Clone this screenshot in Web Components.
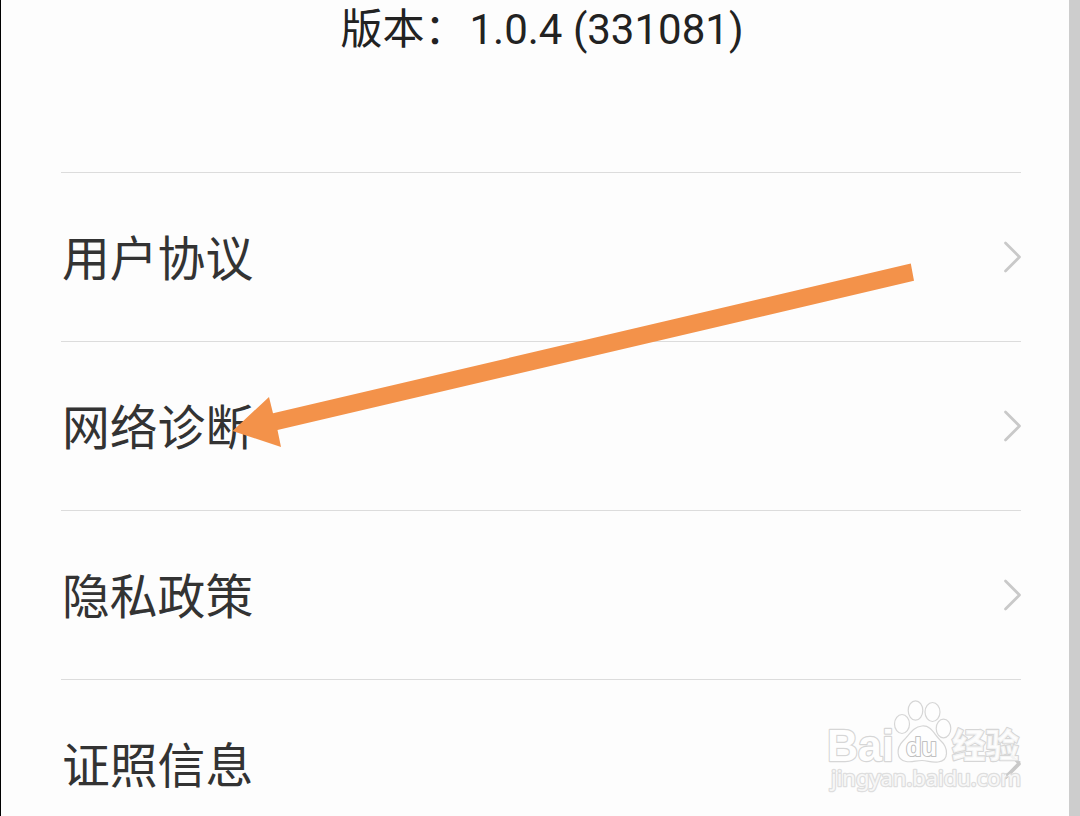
<!DOCTYPE html>
<html lang="zh-CN">
<head>
<meta charset="utf-8">
<title>关于</title>
<style>
    html, body {
        margin: 0;
        height: 100%;
        overflow: hidden;
        background: #fdfdfd;
    }
</style>
</head>
<body>
<about-page>
    <version-label slot="header" label="版本：" value="1.0.4 (331081)"></version-label>
    <menu-row>用户协议</menu-row>
    <menu-row>网络诊断</menu-row>
    <menu-row>隐私政策</menu-row>
    <menu-row>证照信息</menu-row>
    <pointer-arrow slot="overlay"></pointer-arrow>
    <site-watermark slot="overlay"></site-watermark>
</about-page>

<script>
class AboutPage extends HTMLElement {
    constructor() {
        super();
        this.attachShadow({ mode: "open" });
        this.shadowRoot.innerHTML = `
            <style>
            :host {
                display: block;
                position: relative;
                box-sizing: border-box;
                width: 1080px;
                height: 816px;
                overflow: hidden;
                border-left: 1px solid #000;
                border-right: 11px solid #cdcdcd;
                background: #fdfdfd;
                font-family: "Noto Sans CJK SC", sans-serif;
            }
            header {
                display: flex;
                justify-content: center;
                height: 172px;
                box-sizing: border-box;
                padding: 4px 0 0 14px;
            }
            main {
                display: flex;
                flex-direction: column;
                padding: 0 48px 0 60px;
            }
            </style>
            <header><slot name="header"></slot></header>
            <main><slot></slot></main>
            <slot name="overlay"></slot>
        `;
    }
}

class VersionLabel extends HTMLElement {
    static get observedAttributes() {
        return ["label", "value"];
    }

    constructor() {
        super();
        this.attachShadow({ mode: "open" });
    }

    attributeChangedCallback() {
        this.render();
    }

    render() {
        this.shadowRoot.innerHTML = `
            <style>
            :host {
                display: flex;
                align-items: baseline;
                gap: 3px;
                height: 60px;
                line-height: 51px;
                font-family: Roboto, "Noto Sans CJK SC", sans-serif;
                font-size: 42px;
                color: #222;
                white-space: nowrap;
            }
            </style>
            <span>${this.getAttribute("label") || ""}</span>
            <span>${this.getAttribute("value") || ""}</span>
        `;
    }
}

class MenuRow extends HTMLElement {
    constructor() {
        super();
        this.attachShadow({ mode: "open" });
        this.shadowRoot.innerHTML = `
            <style>
            :host {
                display: flex;
                align-items: center;
                justify-content: space-between;
                box-sizing: border-box;
                height: 169px;
                flex: none;
                border-top: 1px solid #dcdcdc;
                color: #333;
                font-size: 47.8px;
                line-height: 70px;
            }
            span {
                padding: 0 0 3px 1px;
            }
            svg {
                display: block;
                width: 20px;
                height: 34px;
            }
            </style>
            <span><slot></slot></span>
            <svg viewBox="0 0 20 34" fill="none" stroke="#c9c9c9" stroke-width="2.7" stroke-linecap="round" stroke-linejoin="round">
                <path d="M4.5 3 L18.5 17 L4.5 31"/>
            </svg>
        `;
    }
}

class PointerArrow extends HTMLElement {
    constructor() {
        super();
        this.attachShadow({ mode: "open" });
        this.shadowRoot.innerHTML = `
            <style>
            :host {
                display: block;
                position: absolute;
                left: 229px;
                top: 260px;
            }
            svg {
                display: block;
            }
            </style>
            <svg width="690" height="190" viewBox="230 260 690 190">
                <path fill="#f3924a" d="M232.5 431 L269 397 L273 413.3 L910.8 263.5 L914 280.8 L277.5 430 L281 447 Z"/>
            </svg>
        `;
    }
}

class SiteWatermark extends HTMLElement {
    constructor() {
        super();
        this.attachShadow({ mode: "open" });
        this.shadowRoot.innerHTML = `
            <style>
            :host {
                display: block;
                position: absolute;
                left: 819px;
                top: 690px;
            }
            svg {
                display: block;
            }
            text {
                paint-order: stroke;
                stroke-linejoin: round;
            }
            .latin {
                font-family: "Liberation Sans", sans-serif;
                font-weight: bold;
            }
            .cjk {
                font-family: "Noto Sans CJK SC", sans-serif;
                font-weight: 900;
            }
            .url {
                font-family: "Noto Sans", sans-serif;
            }
            .soft {
                fill-opacity: 0.8;
            }
            </style>
            <svg width="220" height="120" viewBox="820 690 220 120" fill="#fefefe" stroke="#d6d6d6" stroke-width="1.2">
                <ellipse cx="902" cy="724" rx="7.5" ry="9.5"/>
                <ellipse cx="915.5" cy="710.5" rx="7.3" ry="9.7"/>
                <ellipse cx="932.5" cy="712" rx="7.5" ry="9.5"/>
                <ellipse cx="943.5" cy="728.5" rx="7.3" ry="9.3"/>
                <path d="M922 726 C931 725 934 734 940 740 C949 748 949 761 938 762 C931 763 928 760.5 922 760.5 C916 760.5 912 762.5 906 761.5 C896 760 896 748 903 741 C910 734 913 727 922 726 Z"/>
                <text class="latin" x="827" y="760.5" font-size="45" textLength="67" lengthAdjust="spacingAndGlyphs" stroke-width="2.4">Bai</text>
                <text class="latin" x="906" y="755.5" font-size="25" textLength="31" lengthAdjust="spacingAndGlyphs" stroke="#c0c0c0" stroke-width="2">du</text>
                <text class="cjk soft" x="952" y="758" font-size="34" textLength="67" lengthAdjust="spacingAndGlyphs" stroke-width="2.2">经验</text>
                <text class="url soft" x="831" y="786" font-size="22.5" textLength="190" lengthAdjust="spacingAndGlyphs" stroke="#dedede" stroke-width="2.6">jingyan.baidu.com</text>
                <path d="M1019.5 762 L1007 775" fill="none" stroke="#c9c9c9" stroke-width="2" stroke-linecap="round"/>
            </svg>
        `;
    }
}

customElements.define("about-page", AboutPage);
customElements.define("version-label", VersionLabel);
customElements.define("menu-row", MenuRow);
customElements.define("pointer-arrow", PointerArrow);
customElements.define("site-watermark", SiteWatermark);
</script>
</body>
</html>
